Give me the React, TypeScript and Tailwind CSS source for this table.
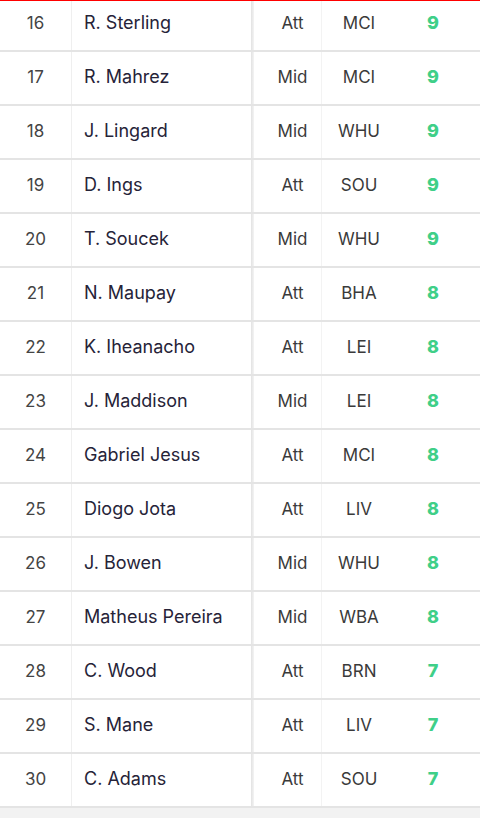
import React from "react";

const rows: [number, string, string, string, number][] = [
  [16, "R. Sterling", "Att", "MCI", 9],
  [17, "R. Mahrez", "Mid", "MCI", 9],
  [18, "J. Lingard", "Mid", "WHU", 9],
  [19, "D. Ings", "Att", "SOU", 9],
  [20, "T. Soucek", "Mid", "WHU", 9],
  [21, "N. Maupay", "Att", "BHA", 8],
  [22, "K. Iheanacho", "Att", "LEI", 8],
  [23, "J. Maddison", "Mid", "LEI", 8],
  [24, "Gabriel Jesus", "Att", "MCI", 8],
  [25, "Diogo Jota", "Att", "LIV", 8],
  [26, "J. Bowen", "Mid", "WHU", 8],
  [27, "Matheus Pereira", "Mid", "WBA", 8],
  [28, "C. Wood", "Att", "BRN", 7],
  [29, "S. Mane", "Att", "LIV", 7],
  [30, "C. Adams", "Att", "SOU", 7],
];

export default function App() {
  return (
    <div className="relative w-[480px] h-[818px] overflow-hidden bg-[#f2f2f2]" style={{ fontFamily: "Inter, 'Noto Sans', sans-serif" }}>
      <div className="absolute top-0 left-0 right-0 h-px bg-[#ff0000] z-10" />
      <div className="mt-[-2px] bg-white">
        {rows.map(([rank, name, pos, team, pts]) => (
          <div key={rank} className="flex h-[54px] border-b-2 border-[#e4e4e4] items-stretch">
            <div className="w-[72px] border-r border-[#efefef] flex items-center justify-center pb-[1px] text-[17px] font-normal text-[#444444]">
              {rank}
            </div>
            <div className="w-[179px] flex items-center pl-[12px] pb-[3px] text-[18px] text-[#262338] font-normal">
              {name}
            </div>
            <div className="w-[3px] bg-gradient-to-r from-[#e2e2e2] to-[#f4f4f4]" />
            <div className="w-[68px] border-r border-[#f3f3f3] flex items-center justify-center pl-[10px] pb-[1px] text-[17px] font-normal text-[#3a3a3a]">
              {pos}
            </div>
            <div className="w-[74px] flex items-center justify-center pb-[1px] text-[17px] font-normal text-[#3a3a3a]">
              {team}
            </div>
            <div className="w-[74px] flex items-center justify-center pb-[3px] text-[18px] font-extrabold text-[#3fcf88]">
              {pts}
            </div>
          </div>
        ))}
      </div>
    </div>
  );
}
